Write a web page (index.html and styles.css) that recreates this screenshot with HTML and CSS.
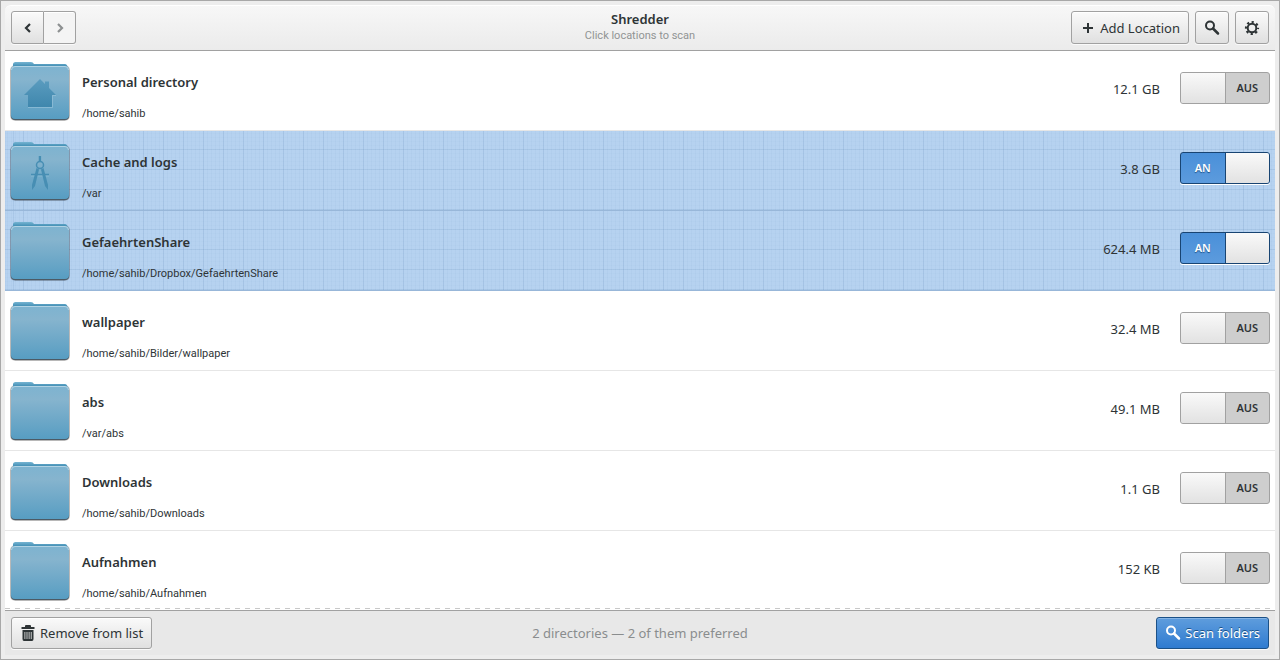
FILE: index.html
```html
<!DOCTYPE html>
<html lang="en">
<head>
<meta charset="utf-8">
<title>Shredder</title>
<link rel="stylesheet" href="styles.css">
</head>
<body>
<svg class="defs" aria-hidden="true">
  <defs>
    <linearGradient id="front" x1="0" y1="0" x2="0" y2="1">
      <stop offset="0" stop-color="#7db3d0"/><stop offset="0.25" stop-color="#86b4ce"/><stop offset="1" stop-color="#579dc2"/>
    </linearGradient>
    <linearGradient id="back" x1="0" y1="0" x2="0" y2="1">
      <stop offset="0" stop-color="#76b4d2"/><stop offset="0.5" stop-color="#3f8cb2"/>
    </linearGradient>
    <linearGradient id="emblem" x1="0" y1="0" x2="0" y2="1">
      <stop offset="0" stop-color="#5b9cbf"/><stop offset="1" stop-color="#3f87ad"/>
    </linearGradient>
    <symbol id="folder" viewBox="0 0 64 64">
      <rect x="2" y="6" width="60" height="56" rx="5" fill="#000" opacity="0.15"/>
      <rect x="2.500" y="6.500" width="59" height="55" rx="5" fill="#000" opacity="0.3"/>
      <path d="M5 12V5.500Q5 3 7.500 3H23Q25 3 26 5H57Q59 5 59.500 8V12Z" fill="url(#back)"/>
      <rect x="3" y="8" width="58" height="53" rx="4" fill="#4c5a65"/>
      <rect x="3" y="7" width="58" height="53" rx="4" fill="url(#front)"/>
      <path d="M3.500 11Q3.500 7.500 7 7.500H57Q60.500 7.500 60.500 11" fill="none" stroke="#b2d3e4"/>
    </symbol>
    <symbol id="house" viewBox="0 0 64 64">
      <path d="M20 48.500H44.500V36.500H48" fill="none" stroke="#9cc6dc" opacity="0.6"/>
      <path d="M32 20L37 25V22.500H41V29L48 36H44V48H20V36H16Z" fill="url(#emblem)"/>
    </symbol>
    <symbol id="compass" viewBox="0 0 64 64">
      <g fill="none" stroke="#9cc6dc" opacity="0.5">
        <path d="M33.500 17V22" stroke-width="1"/><path d="M23 37H41" stroke-width="1"/>
      </g>
      <g fill="none" stroke="#478eb3">
        <path d="M32 17V22" stroke-width="2.500"/><circle cx="32" cy="26" r="3.500" stroke-width="1.500"/>
        <path d="M23 35.500H41" stroke-width="1.500"/>
      </g>
      <path d="M28.500 29L31 30.500L27 47L24 51V46ZM35.500 29L33 30.500L37 47L40 51V46Z" fill="#478eb3"/>
    </symbol>
    <symbol id="search" viewBox="0 0 16 16">
      <circle cx="6" cy="5.500" r="4" fill="none" stroke="currentColor" stroke-width="2"/>
      <path d="M9 8.500L14 13.500" stroke="currentColor" stroke-width="2.500" stroke-linecap="round"/>
    </symbol>
  </defs>
</svg>
<div class="window">
  <header class="header">
    <nav class="history">
      <button class="btn nav-btn" aria-label="Back"><svg class="icon" viewBox="0 0 16 16"><path d="M10 4L6 8L10 12" fill="none" stroke="currentColor" stroke-width="2.200"/></svg></button>
      <button class="btn nav-btn" aria-label="Forward" disabled><svg class="icon" viewBox="0 0 16 16"><path d="M6 4L10 8L6 12" fill="none" stroke="currentColor" stroke-width="2.200"/></svg></button>
    </nav>
    <div class="titles">
      <h1 class="title">Shredder</h1>
      <p class="subtitle">Click locations to scan</p>
    </div>
    <div class="tools">
      <button class="btn"><svg class="icon" viewBox="0 0 16 16"><path d="M8 3V13M3 8H13" stroke="currentColor" stroke-width="2"/></svg>Add Location</button>
      <button class="btn icon-btn" aria-label="Search"><svg class="icon"><use href="#search"/></svg></button>
      <button class="btn icon-btn" aria-label="Settings"><svg class="icon" viewBox="0 0 16 16"><circle cx="8" cy="8" r="4.300" fill="none" stroke="currentColor" stroke-width="2"/><circle cx="8" cy="8" r="6" fill="none" stroke="currentColor" stroke-width="2.200" stroke-dasharray="2.200 2.512" stroke-dashoffset="1.100"/></svg></button>
    </div>
  </header>
  <main class="list">
    <label class="row"><svg class="folder"><use href="#folder"/><use href="#house"/></svg><span class="place"><span class="name">Personal directory</span><span class="path">/home/sahib</span></span><span class="size">12.1 GB</span><span class="switch"><input type="checkbox" role="switch"></span></label>
    <label class="row"><svg class="folder"><use href="#folder"/><use href="#compass"/></svg><span class="place"><span class="name">Cache and logs</span><span class="path">/var</span></span><span class="size">3.8 GB</span><span class="switch"><input type="checkbox" role="switch" checked></span></label>
    <label class="row"><svg class="folder"><use href="#folder"/></svg><span class="place"><span class="name">GefaehrtenShare</span><span class="path">/home/sahib/Dropbox/GefaehrtenShare</span></span><span class="size">624.4 MB</span><span class="switch"><input type="checkbox" role="switch" checked></span></label>
    <label class="row"><svg class="folder"><use href="#folder"/></svg><span class="place"><span class="name">wallpaper</span><span class="path">/home/sahib/Bilder/wallpaper</span></span><span class="size">32.4 MB</span><span class="switch"><input type="checkbox" role="switch"></span></label>
    <label class="row"><svg class="folder"><use href="#folder"/></svg><span class="place"><span class="name">abs</span><span class="path">/var/abs</span></span><span class="size">49.1 MB</span><span class="switch"><input type="checkbox" role="switch"></span></label>
    <label class="row"><svg class="folder"><use href="#folder"/></svg><span class="place"><span class="name">Downloads</span><span class="path">/home/sahib/Downloads</span></span><span class="size">1.1 GB</span><span class="switch"><input type="checkbox" role="switch"></span></label>
    <label class="row"><svg class="folder"><use href="#folder"/></svg><span class="place"><span class="name">Aufnahmen</span><span class="path">/home/sahib/Aufnahmen</span></span><span class="size">152 KB</span><span class="switch"><input type="checkbox" role="switch"></span></label>
  </main>
  <footer class="footer">
    <div class="side"><button class="btn"><svg class="icon" viewBox="0 0 16 16"><path d="M1.500 2H5V1Q5 0 6 0H10Q11 0 11 1V2H14.500V4H1.500Z" fill="currentColor"/><path fill-rule="evenodd" d="M2.500 5H13.500V14Q13.500 16 12 16H4Q2.500 16 2.500 14ZM4.500 7V14H5.300V7ZM6.600 7V14H7.400V7ZM8.700 7V14H9.500V7ZM10.800 7V14H11.600V7Z" fill="currentColor"/></svg>Remove from list</button></div>
    <p class="status">2 directories — 2 of them preferred</p>
    <div class="side end"><button class="btn primary"><svg class="icon"><use href="#search"/></svg>Scan folders</button></div>
  </footer>
</div>
</body>
</html>
```

FILE: styles.css
```css
* { box-sizing: border-box; }
body {
  margin: 0;
  font: 13px/20px "Noto Sans", "Open Sans", sans-serif;
  color: #2e3436;
}
.defs { position: absolute; width: 0; height: 0; }
.window {
  display: flex;
  flex-direction: column;
  height: 100vh;
  padding: 4px;
  border: 1px solid #a8a8a8;
  background: #ededed;
}
.header {
  display: grid;
  grid-template-columns: 1fr auto 1fr;
  align-items: center;
  padding: 5px 6px 6px;
  border-top: 1px solid #fff;
  border-bottom: 1px solid #a1a1a1;
  border-radius: 6px 6px 0 0;
  background: linear-gradient(#f7f7f7, #ebebeb);
}
.history, .tools { display: flex; }
.tools { gap: 6px; justify-content: flex-end; }
.titles { text-align: center; }
.title { margin: 0; font-size: 13px; font-weight: 600; line-height: 17px; }
.subtitle { margin: 0; font: 11px/16px Roboto, sans-serif; color: #919494; }
.btn {
  display: flex;
  align-items: center;
  gap: 4px;
  height: 32px;
  margin: 0;
  padding: 0 8px;
  border: 1px solid #a1a1a1;
  border-radius: 3px;
  background: linear-gradient(#fafafa, #e0e0e0);
  box-shadow: inset 0 1px #fff, 0 1px #fafafa;
  color: inherit;
  font: inherit;
  white-space: nowrap;
}
.header .btn { height: 33px; }
.icon { width: 16px; height: 16px; flex: none; }
.icon-btn { width: 34px; }
.nav-btn { width: 33px; border-radius: 3px 0 0 3px; }
.nav-btn + .nav-btn { width: 32px; border-left: 0; border-radius: 0 3px 3px 0; }
.nav-btn:disabled { background: #f4f4f4; color: #8d9091; }
.list {
  position: relative;
  flex: 1;
  min-height: 0;
  overflow: hidden;
  background: #fff;
}
.list::after {
  content: "";
  position: absolute;
  inset: auto 0 1px;
  height: 1px;
  background: repeating-linear-gradient(90deg, #c8c8c8 0 5px, #fff 5px 10px);
}
.row {
  display: flex;
  align-items: center;
  height: 80px;
  padding: 0 5px 0 3px;
  border-bottom: 1px solid #e6e6e6;
}
.row:has(:checked) {
  border-color: #98b7d9;
  background:
    repeating-linear-gradient(90deg, rgb(70 110 160 / 11%) 0 1px, transparent 1px 20px),
    repeating-linear-gradient(rgb(70 110 160 / 11%) 0 1px, transparent 1px 20px),
    repeating-linear-gradient(90deg, rgb(70 110 160 / 4%) 0 1px, transparent 1px 4px),
    repeating-linear-gradient(rgb(70 110 160 / 2%) 0 1px, transparent 1px 4px),
    #b6d2f0;
  background-position: 18px 0, 0 18px, 2px 0, 0 2px, 0 0;
}
.folder { width: 64px; height: 64px; flex: none; }
.place { display: flex; flex: 1; flex-direction: column; gap: 12px; padding: 14px 0 0 10px; }
.name { font-weight: 600; }
.path { font: 11px/20px Roboto, sans-serif; }
.size { padding: 0 20px 4px 0; }
.switch {
  width: 90px;
  height: 32px;
  margin-bottom: 6px;
}
.switch input {
  appearance: none;
  display: flex;
  width: 100%;
  height: 100%;
  margin: 0;
  border: 1px solid #a1a1a1;
  border-radius: 3px;
  background: #cecece;
  color: #2e3436;
  font: 600 11px/30px "Noto Sans", sans-serif;
  text-align: center;
  overflow: hidden;
}
.switch input::before {
  content: "";
  flex: 1;
  border-right: 1px solid #a1a1a1;
  background: linear-gradient(#f9f9f9, #e2e2e2);
}
.switch input::after { content: "AUS"; flex: 1; }
.switch input:checked {
  flex-direction: row-reverse;
  border-color: #184472;
  background: linear-gradient(#4a90d9, #5c9bdd);
  box-shadow: 0 1px #fff;
  color: #fff;
  text-shadow: 0 1px 1px #1c5187;
}
.switch input:checked::before { border-right: 0; border-left: 1px solid #184472; }
.switch input:checked::after { content: "AN"; }
.footer {
  display: grid;
  grid-template-columns: 1fr auto 1fr;
  align-items: center;
  padding: 6px;
  border-top: 1px solid #a1a1a1;
  background: #e8e8e8;
}
.side { display: flex; }
.end { justify-content: flex-end; }
.status { margin: 0; color: #8a8d8e; }
.primary {
  border-color: #1c5187;
  background: linear-gradient(#5f9ddd, #2f7bd0);
  box-shadow: inset 0 1px #86b5e6, 0 1px #fafafa;
  color: #fff;
  text-shadow: 0 -1px #1c5187;
}
```
